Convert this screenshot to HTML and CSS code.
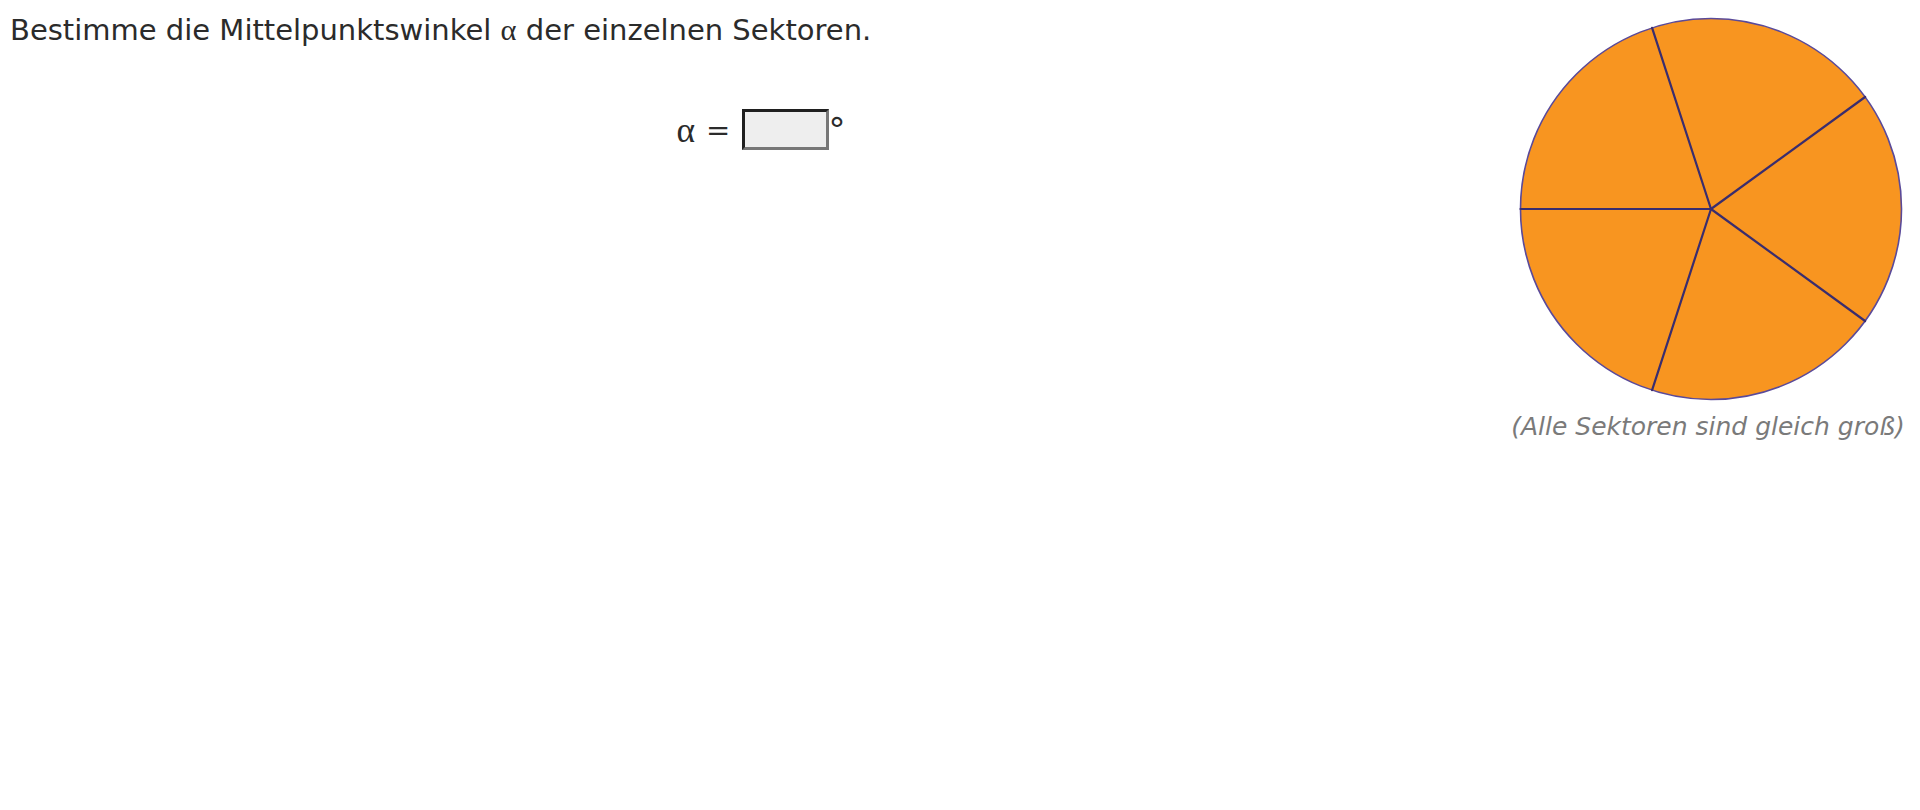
FILE: index.html
```html
<!DOCTYPE html>
<html lang="de">
<head>
<meta charset="utf-8">
<title>Mittelpunktswinkel</title>
<link rel="stylesheet" href="styles.css">
</head>
<body>
<div class="page">
  <div class="main">
    <p class="task">Bestimme die Mittelpunktswinkel <span class="greek">α</span> der einzelnen Sektoren.</p>
    <div class="equation">
      <span class="greek">α</span> <span class="eq">=</span> <span class="answer"></span><span class="deg">°</span>
    </div>
  </div>
  <div class="figure">
    <svg class="pie" width="386" height="386" viewBox="0 0 386 386">
      <circle cx="193" cy="193" r="190.5" fill="#f89520" stroke="#5a4a9a" stroke-width="1.6"/>
      <g stroke="#3a2d6e" stroke-width="2.2" stroke-linecap="round">
        <line x1="193" y1="193" x2="2.5" y2="193"/>
        <line x1="193" y1="193" x2="134.1" y2="11.8"/>
        <line x1="193" y1="193" x2="347.1" y2="81.0"/>
        <line x1="193" y1="193" x2="347.1" y2="305.0"/>
        <line x1="193" y1="193" x2="134.1" y2="374.2"/>
      </g>
    </svg>
    <p class="caption">(Alle Sektoren sind gleich groß)</p>
  </div>
</div>
</body>
</html>
```
FILE: styles.css
```css
html, body {
  margin: 0;
  padding: 0;
  background: #ffffff;
}
body {
  font-family: "DejaVu Sans", Verdana, sans-serif;
  color: #2b2b2b;
}
.page {
  display: flex;
  align-items: flex-start;
}
.main {
  flex: 1;
  padding: 14px 0 0 10px;
}
.task {
  margin: 0;
  font-size: 29px;
  line-height: 32px;
}
.greek {
  font-family: "Liberation Serif", "Times New Roman", serif;
  font-size: 1.05em;
}
.equation {
  margin-top: 63px;
  display: flex;
  justify-content: center;
  align-items: center;
  font-size: 29px;
  line-height: 40px;
  padding-left: 4px;
}
.equation .greek {
  font-size: 1.22em;
  margin-right: 11px;
}
.eq {
  margin-right: 12px;
}
.answer {
  display: inline-block;
  width: 81px;
  height: 35px;
  background: #eeeeee;
  border-style: solid;
  border-width: 3px;
  border-color: #1f1f1f #777777 #777777 #1f1f1f;
}
.deg {
  align-self: flex-start;
  line-height: 40px;
  font-size: 34px;
  margin-left: -1px;
  margin-top: 1px;
}
.figure {
  width: 400px;
  padding: 16px 12px 0 0;
  display: flex;
  flex-direction: column;
  align-items: center;
}
.pie {
  display: block;
  margin-left: 5px;
}
.caption {
  margin: 11px 0 0 0;
  font-size: 25px;
  line-height: 28px;
  font-style: italic;
  color: #7a7a7a;
  white-space: nowrap;
}
```
